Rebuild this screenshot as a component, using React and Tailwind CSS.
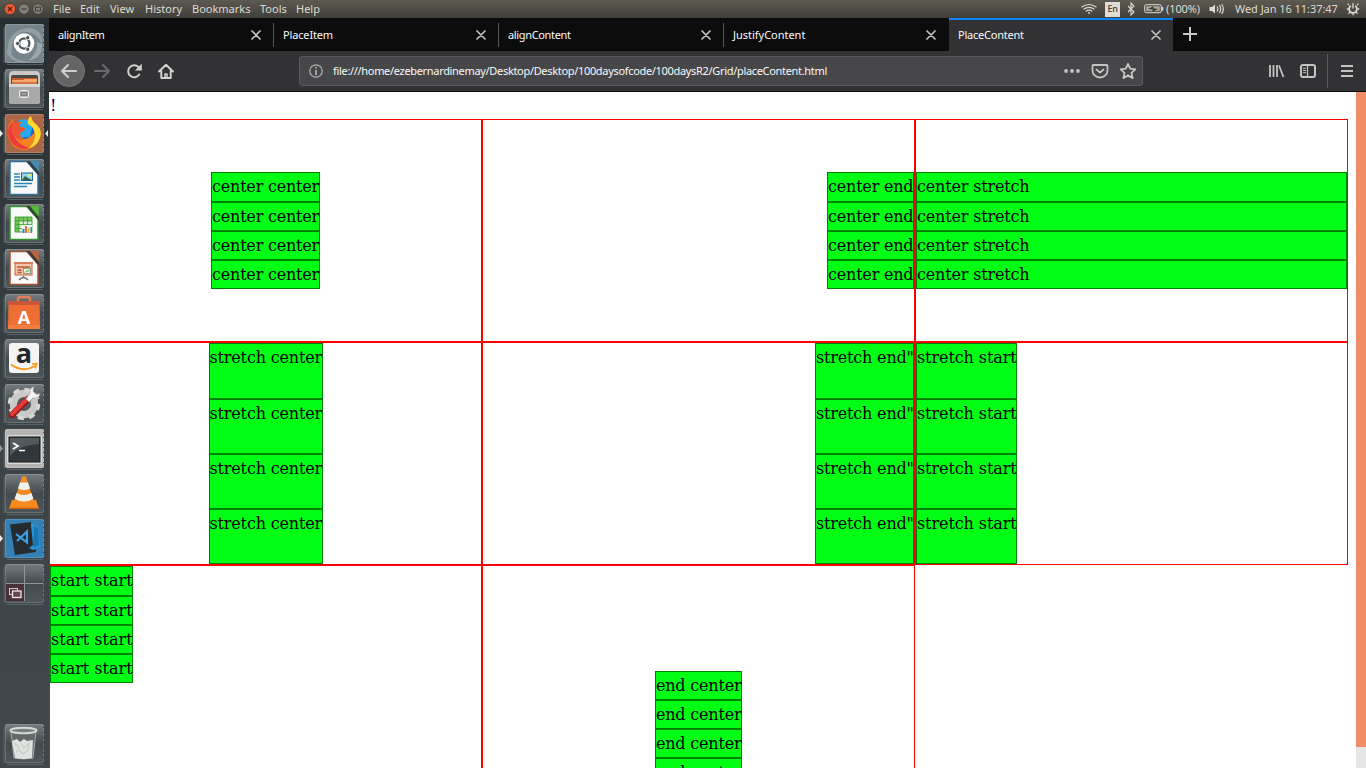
const menus = [
  ['File', 'w-[27px]'],
  ['Edit', 'w-[30px]'],
  ['View', 'w-[35px]'],
  ['History', 'w-[47px]'],
  ['Bookmarks', 'w-[68px]'],
  ['Tools', 'w-[36px]'],
  ['Help', 'w-[30px]'],
];

function WindowButtons() {
  return (
    <svg className="h-[18px] w-[53px] shrink-0" viewBox="0 0 53 18">
      <circle cx="10" cy="9" r="5.6" fill="#ed5b32" stroke="#3b3833" strokeWidth=".8" />
      <path d="M8 7l4 4M12 7l-4 4" stroke="#5b2110" strokeWidth="1.3" />
      <circle cx="24" cy="9" r="5.3" fill="#807e76" stroke="#3b3833" strokeWidth=".8" />
      <path d="M21.5 9h5" stroke="#46443f" strokeWidth="1.3" />
      <circle cx="38" cy="9" r="5.3" fill="#807e76" stroke="#3b3833" strokeWidth=".8" />
      <rect x="35.5" y="7.2" width="5" height="3.6" fill="none" stroke="#46443f" strokeWidth="1.1" />
    </svg>
  );
}

function MenuBar() {
  return (
    <header className="flex h-[18px] shrink-0 items-center bg-linear-to-b from-[#5c5a51] to-[#403e39] text-[11px] leading-[18px] text-[#dfdbd2]">
      <WindowButtons />
      {menus.map(([name, width]) => (
        <span key={name} className={`${width} shrink-0 whitespace-nowrap`}>{name}</span>
      ))}
      <div className="grow" />
      <svg className="h-[18px] w-6 shrink-0" viewBox="0 0 24 18" fill="none" stroke="#dfdbd2" strokeWidth="1.2">
        <path d="M4.5 7.2Q12 1.8 19.5 7.2M6.6 9.3Q12 5.4 17.4 9.3M8.7 11.4Q12 8.8 15.3 11.4" />
        <circle cx="12" cy="13" r=".9" fill="#dfdbd2" stroke="none" />
      </svg>
      <span className="ml-[4px] flex h-[15px] w-[15px] items-center justify-center bg-[#dfdbd2] text-[9px] font-medium tracking-tight text-[#3c3b37]">En</span>
      <svg className="ml-[5px] h-[18px] w-3 shrink-0" viewBox="0 0 12 18" fill="none" stroke="#dfdbd2" strokeWidth="1.1">
        <path d="M3 6l6 6-3 3V3l3 3-6 6" />
      </svg>
      <svg className="ml-[7px] h-[18px] w-5 shrink-0" viewBox="0 0 20 18">
        <rect x=".7" y="4.7" width="16.6" height="8" rx="1.5" fill="none" stroke="#dfdbd2" />
        <rect x="2.2" y="6.2" width="13.6" height="5" fill="#aaa79d" />
        <rect x="17.5" y="7" width="1.8" height="3.5" fill="#dfdbd2" />
        <path d="M4 9l6-3-1 2.3 5 .8-6 2.9 1-2.4z" fill="#35332f" />
      </svg>
      <span className="ml-[2px] w-[37px] shrink-0 whitespace-nowrap tracking-[-0.1px]">(100%)</span>
      <svg className="ml-[6px] h-[18px] w-4 shrink-0" viewBox="0 0 16 18" fill="none" stroke="#dfdbd2" strokeWidth="1.2">
        <path d="M.5 7h2.5l3-2.5v9L3 11H.5z" fill="#dfdbd2" stroke="none" />
        <path d="M8 6.5Q9.7 9 8 11.5M10.4 5.2Q13 9 10.4 12.8M12.6 4Q16.2 9 12.6 14" />
      </svg>
      <span className="ml-[10px] w-[105px] shrink-0 whitespace-nowrap tracking-[-0.05px]">Wed Jan 16 11:37:47</span>
      <svg className="ml-[6px] mr-[6px] h-[18px] w-[14px] shrink-0" viewBox="0 0 14 18" fill="none" stroke="#dfdbd2" strokeWidth="1.3">
        <path d="M4.8 5.8a3.9 3.9 0 1 0 4.4 0" strokeWidth="1.7" />
        <path d="M7 3v5.5M2.8 5L1.6 3.8M11.2 5l1.2-1.2M2.6 9H.8M11.4 9h1.8M3.8 12.2l-1.4 1.4M10.2 12.2l1.4 1.4M7 13.4v1.8" />
      </svg>
    </header>
  );
}

function Ubuntu() {
  return (
    <>
      <rect width="39" height="39" rx="2" fill="#75838a" />
      <path d="M2 30Q2 5 24 4Q38 5 37 20Q30 6 17 8Q5 13 7 31Q12 38 25 37Q10 42 2 30Z" fill="#a9b5b9" opacity=".55" />
      <path d="M37 20Q38 34 23 37Q34 27 32 18Z" fill="#c0cace" opacity=".5" />
      <circle cx="19" cy="19.5" r="10.3" fill="#fff" />
      <circle cx="19.3" cy="19.5" r="5.1" fill="none" stroke="#4d5357" strokeWidth="2.2" />
      <circle cx="12.6" cy="19.5" r="2.1" fill="#4d5357" stroke="#fff" strokeWidth=".8" />
      <circle cx="22.7" cy="13.7" r="2.1" fill="#4d5357" stroke="#fff" strokeWidth=".8" />
      <circle cx="22.7" cy="25.3" r="2.1" fill="#4d5357" stroke="#fff" strokeWidth=".8" />
    </>
  );
}

function Files() {
  return (
    <>
      <path d="M4 7q0-5 4-5h23q4 0 4 5v27H4z" fill="#c9c9c7" />
      <rect x="6" y="6" width="27" height="12" rx="2" fill="#4b4743" />
      <path d="M7 9h25v8H7z" fill="#c55b28" />
      <path d="M7 11h11l2-1h12v6H7z" fill="#f5a76c" />
      <path d="M7 13h25v3H7z" fill="#d77443" />
      <path d="M4 15h31v18q0 2-2 2H6q-2 0-2-2z" fill="#a9a9a9" />
      <path d="M4 15h31v3H4z" fill="#d6d6d4" />
      <rect x="14.5" y="21.5" width="9" height="7" rx="1" fill="#b7b7b7" stroke="#eee" />
      <rect x="16" y="23.8" width="6" height="2.5" fill="none" stroke="#666" />
    </>
  );
}

function Firefox() {
  return (
    <>
      <rect width="39" height="39" rx="2" fill="#aa6748" />
      <circle cx="19" cy="20" r="14" fill="#1460c5" />
      <path d="M13 7Q22 2 28 11L25 23 15 24z" fill="#27a9ed" />
      <path d="M3 19Q2 11 8 5Q9 8 10 9Q14 7 17 8Q14 10 15 13Q20 13 20 15Q18 18 15 19Q15 25 21 25Q26 23 29 19Q29 13 23 9Q22 4 26 2Q27 7 32 11Q39 19 33 28Q28 36 18 36Q4 34 3 19Z" fill="#f58220" />
      <path d="M26 2Q26 7 32 11Q39 18 33 28Q29 33 24 34Q31 27 30 19Q29 13 23 10Q22 5 26 2Z" fill="#ffd92f" />
      <path d="M3 19Q3 12 7 8Q6 21 14 29Q19 32 24 34Q18 37 12 33Q4 29 3 19Z" fill="#ec3d3c" />
      <path d="M8 5Q9 8 10 9Q14 7 17 8Q14 10 15 13Q20 13 20 15Q18 18 15 19Q15 25 19 26Q11 27 8 19Q6 12 8 5Z" fill="#ef5333" />
    </>
  );
}

function Page({ color, fold }) {
  return (
    <>
      <path d="M5 2.5h17L33 15v20.5H5z" fill="#fafafa" stroke={color} strokeWidth="1.5" />
      <path d="M23 1.8h10.8V14z" fill={fold} />
      <path d="M21 2h4l9 11v4z" fill="#292e30" opacity=".75" />
    </>
  );
}

function Writer() {
  return (
    <>
      <Page color="#2c719a" fold="#428cb3" />
      <path d="M9 15h6M9 18h6M9 21h6M9 24.5h18M9 27.5h13" stroke="#2c85b3" strokeWidth="1.3" />
      <rect x="16.5" y="14" width="11" height="7.5" fill="#8fd7f7" stroke="#1b668f" />
      <path d="M17 21l3-4 3 2 4 2z" fill="#356a37" />
      <circle cx="24.5" cy="16.3" r="1.3" fill="#fff23a" />
    </>
  );
}

function Calc() {
  return (
    <>
      <Page color="#32942d" fold="#54bb36" />
      <path d="M10 13h17v15H10z" fill="#dff3d8" />
      <path d="M10 13h17v4H10zM10 13h4v15h-4z" fill="#77c55b" />
      <path d="M10 13h17v15H10zM14 13v15M18.3 13v15M22.6 13v15M10 17h17M10 20.7h17M10 24.5h17" fill="none" stroke="#3b9c31" strokeWidth=".9" />
      <rect x="17" y="21" width="10.5" height="8.5" fill="#e9f4f6" />
      <path d="M18.5 29v-4" stroke="#347dbb" strokeWidth="2" />
      <path d="M21 29v-7" stroke="#df7540" strokeWidth="2" />
      <path d="M23.7 29v-5" stroke="#ecba26" strokeWidth="2" />
      <path d="M26.3 29v-6" stroke="#347dbb" strokeWidth="1.5" />
    </>
  );
}

function Impress() {
  return (
    <>
      <Page color="#a65330" fold="#b56543" />
      <rect x="10" y="14" width="17" height="12" fill="#f4c5ad" stroke="#c1623e" />
      <path d="M9 14h19" stroke="#d67c58" strokeWidth="2" />
      <path d="M12 18h13M12.5 21h4M12.5 23.5h4" stroke="#bd5731" strokeWidth="1.4" />
      <rect x="18.5" y="19.5" width="7" height="5" fill="#eaf3df" stroke="#7b9671" strokeWidth=".8" />
      <path d="M20 23.5l2-2 1 1 2-2" fill="none" stroke="#3d973a" />
      <path d="M18.5 27v2M14 31q4.5-5 9 0" fill="none" stroke="#666" strokeWidth="1.3" />
    </>
  );
}

function Software() {
  return (
    <>
      <path d="M13 11V5q0-2 2-2h8q2 0 2 2v6" fill="none" stroke="#e5775a" strokeWidth="2.5" />
      <path d="M3.5 7h31l.5 28H3z" fill="#ee6e35" />
      <path d="M3.5 7h31v4H3.5z" fill="#c85737" />
      <path d="M3 31h32v4H3z" fill="#f47c3c" />
      <text x="19" y="30" textAnchor="middle" fontFamily="Open Sans, sans-serif" fontWeight="700" fontSize="18" fill="#fff">A</text>
    </>
  );
}

function Amazon() {
  return (
    <>
      <rect x="4" y="4" width="30" height="30" rx="3" fill="#f4f4f4" />
      <text x="19" y="24" textAnchor="middle" fontFamily="Open Sans, sans-serif" fontWeight="700" fontSize="27" fill="#25282a">a</text>
      <path d="M6 25.5Q18 34 30 27" fill="none" stroke="#f59a18" strokeWidth="1.9" />
      <path d="M27 25l4.7-.4-1.4 4.7" fill="none" stroke="#f59a18" strokeWidth="1.7" />
    </>
  );
}

function Settings() {
  return (
    <>
      <circle cx="19" cy="20" r="10.5" fill="none" stroke="#c9c9c8" strokeWidth="7.5" />
      <circle cx="19" cy="20" r="14.3" fill="none" stroke="#d7d7d6" strokeWidth="4" strokeDasharray="6 5.23" />
      <circle cx="19" cy="20" r="6.8" fill="#555a5c" />
      <path d="M7 31L23 15" stroke="#951b1b" strokeWidth="6.5" strokeLinecap="round" />
      <path d="M7 30L22 15" stroke="#e43b37" strokeWidth="4" strokeLinecap="round" />
      <path d="M21 15L25 9Q24 4 29 2.5L28 7l3 3.5 4-1Q34 15 28 14l-4 4z" fill="#f4f4f3" stroke="#9b9b9b" strokeWidth=".7" />
    </>
  );
}

function Terminal() {
  return (
    <>
      <rect width="39" height="39" rx="2" fill="#b5b4b2" />
      <rect x="2" y="6" width="35" height="29" rx="2" fill="#dad9d5" />
      <rect x="4" y="8" width="31" height="25" fill="#31373a" stroke="#151819" />
      <path d="M5 9h29v6Q14 16 5 27z" fill="#525a5d" />
      <path d="M8 14l5 3-5 3M14 21.5h6" fill="none" stroke="#fff" strokeWidth="1.6" />
    </>
  );
}

function Vlc() {
  return (
    <>
      <path d="M7 26h24l3 9H4z" fill="#f78b1c" />
      <path d="M4 33.5h30V35H4z" fill="#d66310" />
      <path d="M16.8 3q2.2-1.5 4.4 0L29 28q-10 5-20 0z" fill="#f58a20" />
      <path d="M15 8.5h8l2 6q-6 3-12 0zM11.6 19q7.4 4 14.8 0l2 6q-9.4 5-18.8 0z" fill="#f2f2ed" />
    </>
  );
}

function Code() {
  return (
    <>
      <rect width="39" height="39" rx="2" fill="#347fb4" />
      <path d="M5 5.5l21-2.5 5 30-21 3z" fill="#252b2e" />
      <path d="M26 4l7 3 2 21-7 3-4-2 4-3-2-20z" fill="#2b94d7" />
      <path d="M29 7l4 2 1 17-6 3z" fill="#1677b5" />
      <path d="M11 15l11 8.5V12.5L12 22" fill="none" stroke="#3da1e5" strokeWidth="2.2" />
    </>
  );
}

function Workspaces() {
  return (
    <>
      <rect x="1" y="20" width="18" height="17" fill="#4b303b" />
      <path d="M19.5 1v36M1 19.5h37" stroke="#92979a" />
      <rect x="4.5" y="24.5" width="8" height="6" fill="none" stroke="#d5cbd0" />
      <rect x="7.5" y="27" width="8.5" height="6.5" fill="#674653" stroke="#eee7e9" strokeWidth="1.3" />
    </>
  );
}

function Trash() {
  return (
    <>
      <path d="M6 7h25l-3 27q-9.5 2-19 0z" fill="#636969" stroke="#a6abaa" />
      <path d="M7 17l5-2 3 3 4-3 3 2 6-1-1 18q-8 2-17 0z" fill="#e0e2df" />
      <path d="M9 19l5 4-3 6m5-10l3 5 5-5-1 7m-9 0l4 4 5-4" fill="none" stroke="#c6c9c6" strokeWidth="1.1" />
      <ellipse cx="18.5" cy="6.5" rx="13" ry="2.7" fill="#798080" stroke="#d4d7d5" strokeWidth="2" />
    </>
  );
}

function Tile({ children, left, right }) {
  return (
    <div className="flex h-[45px] w-[49px] shrink-0 items-start">
      <svg className="h-[45px] w-[49px]" viewBox="0 0 49 45">
        <path d="M7 40.5h36" stroke="#647075" opacity=".7" />
        <rect x="3.5" y="3" width="2" height="36" fill="#5a6468" opacity=".7" />
        <rect x="5" y="0" width="39" height="39" rx="2" fill="url(#tile)" />
        <g transform="translate(5 0)">{children}</g>
        <rect x="5.5" y=".5" width="38" height="38" rx="2" fill="none" stroke="#fff" strokeOpacity=".16" />
        <path d="M43.5 3v34" stroke="#1b2022" strokeOpacity=".7" strokeDasharray="1 4" />
        {left && <path d="M0 16l3 3.5L0 23z" fill={left} />}
        {right && <path d="M48 16l-3 3.5 3 3.5z" fill="#eee" />}
      </svg>
    </div>
  );
}

function Launcher() {
  return (
    <aside className="flex w-[49px] shrink-0 flex-col bg-linear-to-b from-[#272e31] via-[#3b4347] to-[#40484b] pt-[6px]">
      <svg className="absolute h-0 w-0">
        <linearGradient id="tile" x2="0" y2="1">
          <stop offset="0" stopColor="#757b7e" />
          <stop offset=".5" stopColor="#444b4e" />
          <stop offset="1" stopColor="#4f565a" />
        </linearGradient>
      </svg>
      <Tile><Ubuntu /></Tile>
      <Tile><Files /></Tile>
      <Tile left="#eee" right><Firefox /></Tile>
      <Tile><Writer /></Tile>
      <Tile><Calc /></Tile>
      <Tile><Impress /></Tile>
      <Tile><Software /></Tile>
      <Tile><Amazon /></Tile>
      <Tile><Settings /></Tile>
      <Tile left="#929899"><Terminal /></Tile>
      <Tile><Vlc /></Tile>
      <Tile left="#eee"><Code /></Tile>
      <Tile><Workspaces /></Tile>
      <div className="grow" />
      <div className="-mb-px"><Tile><Trash /></Tile></div>
    </aside>
  );
}

const tabs = [
  ['alignItem', false, 'w-[225px] pr-[13px]', 'tracking-[-0.35px]'],
  ['PlaceItem', true, 'w-[225px] pr-[13px]', 'tracking-[-0.15px]'],
  ['alignContent', true, 'w-[225px] pr-[13px]', 'tracking-[-0.35px]'],
  ['JustifyContent', true, 'w-[225px] pr-[13px]', 'tracking-[-0.02px]'],
  ['PlaceContent', false, 'w-[224px] pr-[12px]', 'tracking-[-0.22px]'],
];

function Tabs() {
  return (
    <div className="flex h-[33px] shrink-0 bg-[#0c0c0d] text-[11px] text-[#f9f9fa]">
      {tabs.map(([name, divider, size, tracking], i) => (
        <div
          key={name}
          className={`relative flex shrink-0 items-center justify-between pl-[9px] ${size} ${i === 4 ? 'bg-[#323234] shadow-[inset_0_2px_0_#0a84ff]' : ''}`}
        >
          {divider && <i className="absolute top-[5px] -left-px h-6 w-px bg-[#55555a]" />}
          <span className={`whitespace-nowrap pt-[2px] ${tracking}`}>{name}</span>
          <svg className="h-[10px] w-[10px]" viewBox="0 0 10 10" stroke="#c3c3c4" strokeWidth="1.7" strokeLinecap="round">
            <path d="M1 1l8 8M9 1L1 9" />
          </svg>
        </div>
      ))}
      <svg className="mt-[9px] ml-[10px] h-[14px] w-[14px]" viewBox="0 0 14 14" stroke="#c9c9ca" strokeWidth="2">
        <path d="M7 0v14M0 7h14" />
      </svg>
    </div>
  );
}

function Toolbar() {
  return (
    <div className="flex h-[41px] shrink-0 items-center border-b border-[#0c0c0d] bg-[#323234]">
      <svg className="h-10 w-[250px] shrink-0" viewBox="0 0 250 40" fill="none" stroke="#d0d0d1" strokeWidth="2" strokeLinecap="round" strokeLinejoin="round">
        <circle cx="20" cy="20" r="15.5" fill="#656566" stroke="#777778" strokeWidth="1" />
        <path d="M13 20h14M19 14l-6 6 6 6" />
        <path d="M46 20h14M54 14l6 6-6 6" stroke="#6a6a6c" />
        <path d="M90.2 23.5a6 6 0 1 1-.8-7.5" />
        <path d="M92.8 12.7v6.8H86z" fill="#d0d0d1" stroke="none" />
        <path d="M110 20.5l7-6.8 7 6.8M112.3 20v7h9.4v-7" />
        <path d="M116 27v-4h2v4" strokeWidth="1.5" />
      </svg>
      <div className="flex h-[30px] w-[844px] shrink-0 items-center rounded-[3px] border border-[#5a5a5c] bg-[#474749] text-[11px] text-[#f9f9fa]">
        <svg className="ml-[9px] h-[14px] w-[14px]" viewBox="0 0 14 14" fill="none" stroke="#b5b5b6" strokeWidth="1.2">
          <circle cx="7" cy="7" r="6.2" />
          <path d="M7 6v5M7 3v1.6" strokeWidth="1.7" />
        </svg>
        <span className="ml-[10px] grow whitespace-nowrap tracking-[-0.32px]">file:///home/ezebernardinemay/Desktop/Desktop/100daysofcode/100daysR2/Grid/placeContent.html</span>
        <svg className="mr-[3px] h-5 w-[76px] shrink-0" viewBox="0 0 76 20" fill="none" stroke="#c4c4c5" strokeWidth="1.8" strokeLinejoin="round" strokeLinecap="round">
          <g fill="#c4c4c5" stroke="none">
            <circle cx="3" cy="10" r="1.9" /><circle cx="9" cy="10" r="1.9" /><circle cx="15" cy="10" r="1.9" />
          </g>
          <path d="M30.5 4h13q1 0 1 1v4.5a7.5 7 0 0 1-15 0V5q0-1 1-1z" />
          <path d="M33.5 8.5l3.5 3.2 3.5-3.2" />
          <path d="M65 2.8l2.2 4.9 5.1.6-3.8 3.5 1.1 5.3-4.6-2.7-4.6 2.7 1.1-5.3-3.8-3.5 5.1-.6z" />
        </svg>
      </div>
      <div className="grow" />
      <svg className="h-10 w-[100px] shrink-0" viewBox="0 0 100 40" fill="none" stroke="#c4c4c5" strokeWidth="2">
        <path d="M4 14v12M7.5 14v12M11 14v12M13 14.5l4.5 11.5" strokeWidth="1.8" />
        <rect x="35" y="14" width="14" height="12" rx="2" />
        <path d="M41.5 14v12" strokeWidth="1.3" />
        <path d="M37 17.3h3M37 19.5h3M37 21.7h3" strokeWidth="1" />
        <path d="M61.5 3v34" stroke="#5b5b5d" strokeWidth="1" />
        <path d="M75 15h12M75 20h12M75 25h12" />
      </svg>
    </div>
  );
}

const item = 'border border-[#008000] bg-[#00ff15]';
const cell = 'grid h-[223px] border border-[#ff0000]';
const short = 'grid-rows-[30px_29px_29px_29px]';
const tall = 'grid-rows-[56px_55px_55px_55px]';

function Cell({ label, className, width }) {
  return (
    <div className={`${cell} ${className}`}>
      {[0, 1, 2, 3].map((n) => (
        <div key={n} className={`${item} ${width} whitespace-nowrap`}>{label}</div>
      ))}
    </div>
  );
}

function PageContent() {
  return (
    <main className="flex min-h-0 grow bg-white">
      <div className="h-[676px] w-[1299px] shrink-0 overflow-hidden font-['DejaVu_Serif',serif] text-[16px] leading-[27px] text-black">
        <div className="h-[27px] pl-px tracking-tight text-[#000060]">!</div>
        <div className="grid grid-cols-[433px_433px_433px]">
          <Cell label="center center" width="w-[109px] tracking-[-0.2px]" className={`${short} content-center justify-center`} />
          <Cell label="center end" width="w-[87px] tracking-[-0.2px]" className={`${short} content-center justify-end`} />
          <Cell label="center stretch" width="w-full tracking-[-0.17px]" className={`${short} content-center`} />
          <Cell label="stretch center" width="w-[114px] tracking-[-0.16px]" className={`${tall} justify-center`} />
          <Cell label={'stretch end"'} width="w-[99px] tracking-[-0.18px]" className={`${tall} justify-end`} />
          <Cell label="stretch start" width="w-[101px] tracking-[-0.09px]" className={`${tall} justify-start`} />
          <Cell label="start start" width="w-[83px]" className={`${short} content-start justify-start`} />
          <Cell label="end center" width="w-[87px] tracking-[-0.2px]" className="grid-rows-[29px_29px_29px_29px] content-end justify-center" />
        </div>
      </div>
      <div className="grow" />
      <div className="w-[10px] bg-[#e6e6e6]">
        <div className="h-[655px] bg-[#f08c66]" />
      </div>
    </main>
  );
}

export default function App() {
  return (
    <div className="flex h-[768px] w-[1366px] flex-col overflow-hidden font-['Noto_Sans',sans-serif]">
      <MenuBar />
      <div className="flex min-h-0 grow">
        <Launcher />
        <div className="flex min-w-0 grow flex-col">
          <Tabs />
          <Toolbar />
          <PageContent />
        </div>
      </div>
    </div>
  );
}
